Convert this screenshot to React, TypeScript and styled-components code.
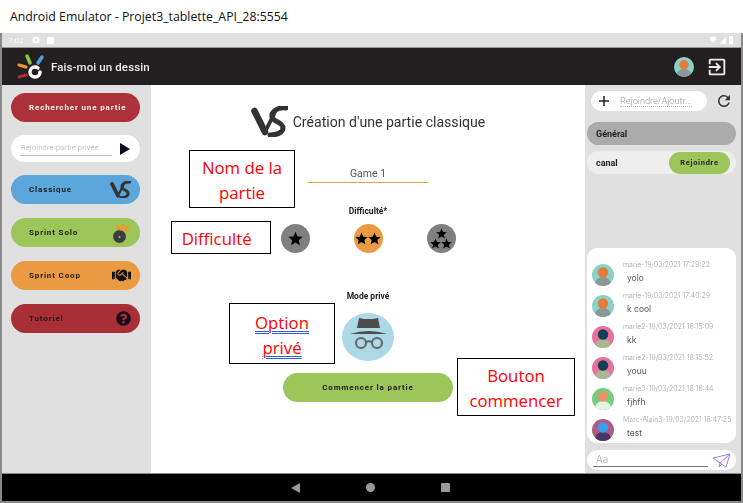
import React from "react";
import styled, { createGlobalStyle } from "styled-components";
import { FaHandshake, FaQuestionCircle } from "react-icons/fa";
import { MdExitToApp, MdRefresh } from "react-icons/md";

const Global = createGlobalStyle`
  html, body { margin: 0; padding: 0; width: 743px; height: 503px; overflow: hidden; background: #fff; }
  * { box-sizing: border-box; }
`;
const Root = styled.div`
  position: relative; width: 743px; height: 503px; overflow: hidden; display: flex; flex-direction: column;
  background: #fff; font-family: Roboto, sans-serif;
`;
const TitleBar = styled.div`
  height: 33px; padding: 0 0 0 10px; display: flex; align-items: center; background: #fff;
  font: 12.3px "Open Sans", sans-serif; color: #111;
`;
const Emulator = styled.div`
  flex: 1; display: flex; flex-direction: column; min-height: 0; filter: blur(0.45px);
  border-left: 2px solid #8a8a8a; border-right: 2px solid #8a8a8a; border-bottom: 2px solid #8a8a8a;
`;
const StatusBar = styled.div`
  height: 15px; background: #dfdfdf; display: flex; align-items: center; gap: 7px; padding: 0 6px;
  color: #fff; font-size: 8px; border-bottom: 1px solid #999;
`;
const StatusTime = styled.span` margin-right: 2px; `;
const StatusRight = styled.div` margin-left: auto; display: flex; gap: 3px; align-items: center; padding-right: 2px; `;
const AppBar = styled.div`
  height: 37px; background: #231f20; display: flex; align-items: center; padding: 0 13px 0 14px; color: #eee;
`;
const AppTitle = styled.div` margin-left: 4px; font-size: 11.5px; font-weight: 500; letter-spacing: .1px; `;
const AppActions = styled.div` margin-left: auto; display: flex; align-items: center; gap: 12px; `;
const Body = styled.div` flex: 1; display: flex; min-height: 0; `;
const Sidebar = styled.aside`
  width: 149px; background: #e0e0e0; padding: 8px 11px 8px 9px; display: flex; flex-direction: column; gap: 14px;
`;
const Pill = styled.div<{ $bg: string; $light?: boolean }>`
  flex: none; height: 29px; border-radius: 15px; background: ${p => p.$bg}; color: ${p => p.$light ? "#f4f4f4" : "#1a1a1a"};
  display: flex; align-items: center; justify-content: space-between; padding: 0 9px 0 18px;
  font-size: 8px; font-weight: 700; letter-spacing: .85px;
`;
const SearchPill = styled(Pill)` margin-bottom: -1px; `;
const PrivateInput = styled.div`
  height: 27px; margin-bottom: -1px; border-radius: 14px; background: #fff; display: flex; align-items: center; justify-content: space-between;
  padding: 0 9px 0 9px; color: #aaa; font-size: 7.5px; font-weight: 300; letter-spacing: .2px;
`;
const PrivateLabel = styled.span`
  display: block; width: 92px; padding: 0 0 3px 0; margin-top: 2px; border-bottom: 1px solid #bdbdbd; white-space: nowrap;
  text-indent: 1px;
`;
const Main = styled.main`
  flex: 1; background: #fff; display: flex; flex-direction: column; align-items: center; padding-top: 21px;
`;
const Heading = styled.div` display: flex; align-items: center; gap: 5px; height: 31px; `;
const HeadingText = styled.h1` margin: 0; font-size: 14.1px; font-weight: 400; color: #333; white-space: nowrap; `;
const NameField = styled.div`
  width: 120px; margin-top: 30px; padding-bottom: 1px; border-bottom: 1.5px solid #ee9c4c; text-align: center;
  font-size: 10.5px; color: #555; line-height: 14px;
`;
const SmallLabel = styled.div` font-size: 8.5px; font-weight: 700; color: #222; line-height: 10px; `;
const DiffLabel = styled(SmallLabel)` margin-top: 23px; `;
const DiffRow = styled.div` margin-top: 8px; width: 175px; display: flex; justify-content: space-between; `;
const DiffButton = styled.div<{ $active?: boolean }>`
  width: 29px; height: 29px; border-radius: 50%; background: ${p => p.$active ? "#ea9a41" : "#808080"};
  display: flex; flex-direction: column; align-items: center; justify-content: center; color: #000;
`;
const StarRow = styled.div` display: flex; justify-content: center; height: 10px; align-items: center; `;
const PrivLabel = styled(SmallLabel)` margin-top: 38px; `;
const PrivateButton = styled.div`
  margin-top: 12px; width: 52px; height: 48px; border-radius: 50%; background: #add8e6; display: flex; align-items: center; justify-content: center;
  padding-bottom: 8px;
`;
const StartButton = styled(Pill)`
  margin-top: 12px; width: 170px; justify-content: center; padding: 0;
`;
const ChatPanel = styled.aside`
  width: 156px; background: #e0e0e0; padding: 6px 5px 3px 2px; display: flex; flex-direction: column;
`;
const ChannelBar = styled.div` display: flex; align-items: center; padding-left: 4px; height: 20px; `;
const ChannelInput = styled.div`
  width: 116px; height: 20px; border-radius: 10px; background: #fff; display: flex; align-items: center; padding-left: 7px; gap: 10px;
  color: #999; font-size: 9.2px; font-weight: 300;
`;
const ChannelText = styled.span` border-bottom: 1px dotted #bbb; line-height: 10px; white-space: nowrap; `;
const Refresh = styled.div` margin-left: 8px; display: flex; color: #333; `;
const ChannelPill = styled.div<{ $bg: string }>`
  height: 23px; border-radius: 12px; background: ${p => p.$bg}; display: flex; align-items: center; justify-content: space-between;
  padding: 0 6px 0 9px; font-size: 9px; font-weight: 700; color: #222;
`;
const GeneralPill = styled(ChannelPill)` margin-top: 11px; `;
const CanalPill = styled(ChannelPill)` margin-top: 6px; `;
const JoinButton = styled.div`
  width: 61px; height: 22px; border-radius: 11px; background: #9dc65a; display: flex; align-items: center; justify-content: center;
  font-size: 7.5px; letter-spacing: .7px; font-weight: 700; color: #222;
`;
const Messages = styled.div`
  margin-top: auto; height: 195px; background: #fff; border-radius: 10px; padding: 16px 0 0 5px; display: flex; flex-direction: column;
`;
const Message = styled.div` flex: none; height: 31px; display: flex; gap: 9px; `;
const MessageBody = styled.div` display: flex; flex-direction: column; gap: 3px; margin-top: -4px; `;
const Meta = styled.div` font: 300 7px Inter, sans-serif; color: #a5a5a5; line-height: 10px; white-space: nowrap; `;
const Text = styled.div` font: 400 8.5px Inter, sans-serif; color: #555; line-height: 11px; padding-left: 4px; `;
const Composer = styled.div`
  margin-top: 7px; height: 20px; border-radius: 10px; background: #fff; display: flex; align-items: center; justify-content: space-between; padding: 0 5px 0 6px;
`;
const ComposerField = styled.div`
  width: 115px; height: 14px; border-bottom: 1px solid #777; color: #aaa; font: 300 10px Inter, sans-serif; line-height: 13px; padding-left: 3px;
`;
const NavBar = styled.div`
  height: 28px; background: #000; border-top: 1px solid #888; display: flex; align-items: center; justify-content: center; gap: 66px; padding-right: 3px;
`;
const Note = styled.div<{ $x: number; $y: number; $w: number; $h: number }>`
  position: absolute; left: ${p => p.$x}px; top: ${p => p.$y}px; width: ${p => p.$w}px; height: ${p => p.$h}px;
  background: #fff; border: 1px solid #000; color: #f00; text-align: center; display: flex; align-items: center; justify-content: center;
  font: 16.8px/25px "Open Sans", sans-serif; padding-top: 2px; white-space: pre;
`;
const Spell = styled.span`
  text-decoration: underline double #2b5fd0; text-decoration-thickness: 1px; text-underline-offset: 2px;
`;

const VS = ({ s = 37, c = "#333" }: { s?: number; c?: string }) => (
  <svg width={s} height={s * 31 / 37} viewBox="0 0 37 31" fill="none" strokeLinecap="round">
    <path d="M3.500 5L14 26" stroke={c} strokeWidth="6.500" />
    <path d="M14 26L24 6" stroke={c} strokeWidth="3.800" />
    <path d="M35 2C26 1 20 6 21 11 22 16 32 16 32 22 32 27 25 29 19 29" stroke={c} strokeWidth="5" />
  </svg>
);
const Logo = () => (
  <svg width="31" height="27" viewBox="0 0 31 27" fill="none" strokeLinecap="round">
    <path d="M11 3l3 7" stroke="#8dc63f" strokeWidth="3.500" />
    <path d="M26 4l-4 6" stroke="#4aa3df" strokeWidth="3.500" />
    <path d="M3 12l7 2" stroke="#ef9a2e" strokeWidth="3" />
    <path d="M3 24l7-2" stroke="#b02a37" strokeWidth="3" />
    <circle cx="19" cy="19" r="5" stroke="#fff" strokeWidth="3.500" strokeDasharray="26 6" />
  </svg>
);
const Avatar = ({ bg, head, body, s = 22 }: { bg: string; head: string; body: string; s?: number }) => (
  <svg width={s} height={s} viewBox="0 0 22 22" style={{ flex: "none" }}>
    <defs><clipPath id={`c${bg.slice(1)}${s}`}><circle cx="11" cy="11" r="11" /></clipPath></defs>
    <g clipPath={`url(#c${bg.slice(1)}${s})`}>
      <rect width="22" height="22" fill={bg} />
      <ellipse cx="11" cy="20" rx="8" ry="7" fill={body} />
      <circle cx="11" cy="8.500" r="5.200" fill={head} />
    </g>
  </svg>
);
const Star = ({ s = 12 }: { s?: number }) => (
  <svg width={s} height={s} viewBox="0 0 24 24" fill="#000"><path d="M12 1l3.200 7.600 8.200.7-6.200 5.400 1.900 8L12 18.400 4.900 22.700l1.900-8L.6 9.300l8.200-.7z" /></svg>
);

const messages = [
  ["marie-19/03/2021 17:29:22", "yolo", "#8ad2c8", "#e37b3a", "#8b9699"],
  ["marie-19/03/2021 17:40:29", "k cool", "#8ad2c8", "#e37b3a", "#8b9699"],
  ["marie2-19/03/2021 18:15:09", "kk", "#e8709a", "#123f57", "#a9b996"],
  ["marie2-19/03/2021 18:15:52", "youu", "#e8709a", "#123f57", "#a9b996"],
  ["marie3-19/03/2021 18:16:44", "fjhfh", "#74cc7c", "#e8946a", "#e4f3e4"],
  ["Marc-Alain3-19/03/2021 18:47:25", "test", "#b05a86", "#3aa0e8", "#4a3566"],
];

export default function App() {
  return (
    <Root>
      <Global />
      <TitleBar>Android Emulator - Projet3_tablette_API_28:5554</TitleBar>
      <Emulator>
        <StatusBar>
          <StatusTime>7:02</StatusTime>
          <svg width="8" height="8" viewBox="0 0 8 8"><circle cx="4" cy="4" r="2.600" fill="none" stroke="#fff" strokeWidth="2" /></svg>
          <svg width="7" height="7" viewBox="0 0 7 7"><rect width="7" height="7" rx="1" fill="#fff" /></svg>
          <StatusRight>
            <svg width="8" height="8" viewBox="0 0 8 8"><path d="M0 2q4-3 8 0L4 7z" fill="#fff" /></svg>
            <svg width="6" height="8" viewBox="0 0 6 8"><path d="M6 0v8H0z" fill="#fff" /></svg>
            <svg width="4" height="8" viewBox="0 0 4 8"><rect width="4" height="8" fill="#fff" /></svg>
          </StatusRight>
        </StatusBar>
        <AppBar>
          <Logo />
          <AppTitle>Fais-moi un dessin</AppTitle>
          <AppActions>
            <Avatar bg="#8ad2c8" head="#e37b3a" body="#8b9699" s={20} />
            <MdExitToApp size={22} color="#eee" />
          </AppActions>
        </AppBar>
        <Body>
          <Sidebar>
            <SearchPill $bg="#ad3138" $light>Rechercher une partie</SearchPill>
            <PrivateInput>
              <PrivateLabel>Rejoindre partie privée</PrivateLabel>
              <svg width="12" height="14" viewBox="0 0 12 14"><path d="M1 1l10 6-10 6z" fill="#12061e" /></svg>
            </PrivateInput>
            <Pill $bg="#5ba6da">Classique<VS s={21} /></Pill>
            <Pill $bg="#9dc65a">Sprint Solo
              <svg width="19" height="22" viewBox="0 0 19 22">
                <circle cx="7.500" cy="14.500" r="6.500" fill="#3d3d3d" />
                <path d="M5 8L4 2l4 3 3-4 2 4 5-2-2 6z" fill="#ee9a2c" />
                <circle cx="7.500" cy="15" r="1" fill="#bbb" />
              </svg>
            </Pill>
            <Pill $bg="#ea9a41">Sprint Coop<FaHandshake size={19} color="#111" /></Pill>
            <Pill $bg="#a92f37">Tutoriel<FaQuestionCircle size={15} color="#170a1e" /></Pill>
          </Sidebar>
          <Main>
            <Heading><VS /><HeadingText>Création d'une partie classique</HeadingText></Heading>
            <NameField>Game 1</NameField>
            <DiffLabel>Difficulté*</DiffLabel>
            <DiffRow>
              <DiffButton><StarRow><Star s={15} /></StarRow></DiffButton>
              <DiffButton $active><StarRow><Star s={13} /><Star s={13} /></StarRow></DiffButton>
              <DiffButton><StarRow><Star s={11} /></StarRow><StarRow><Star s={11} /><Star s={11} /></StarRow></DiffButton>
            </DiffRow>
            <PrivLabel>Mode privé</PrivLabel>
            <PrivateButton>
              <svg width="37" height="33" viewBox="0 0 37 33" fill="none">
                <path d="M7 11L9 1c3 1 6 1 9.500 1 3 0 6 0 9.500-1l2 10z" fill="#4c4c4c" />
                <path d="M0 17q18.500-6 37 0z" fill="#4c4c4c" />
                <circle cx="11" cy="26" r="5" stroke="#5b6468" strokeWidth="2" />
                <circle cx="27" cy="26" r="5" stroke="#5b6468" strokeWidth="2" />
                <path d="M16 25q2.500-1.500 6 0" stroke="#5b6468" strokeWidth="2" />
              </svg>
            </PrivateButton>
            <StartButton $bg="#9dc65a">Commencer la partie</StartButton>
          </Main>
          <ChatPanel>
            <ChannelBar>
              <ChannelInput>
                <svg width="12" height="12" viewBox="0 0 12 12"><path d="M6 1v10M1 6h10" stroke="#222" strokeWidth="1.500" /></svg>
                <ChannelText>Rejoindre/Ajoutr...</ChannelText>
              </ChannelInput>
              <Refresh><MdRefresh size={18} /></Refresh>
            </ChannelBar>
            <GeneralPill $bg="#ababab">Général</GeneralPill>
            <CanalPill $bg="#eeeeee">canal<JoinButton>Rejoindre</JoinButton></CanalPill>
            <Messages>
              {messages.map(m => (
                <Message key={m[0]}>
                  <Avatar bg={m[2]} head={m[3]} body={m[4]} />
                  <MessageBody><Meta>{m[0]}</Meta><Text>{m[1]}</Text></MessageBody>
                </Message>
              ))}
            </Messages>
            <Composer>
              <ComposerField>Aa</ComposerField>
              <svg width="19" height="15" viewBox="0 0 19 15" fill="none" stroke="#a87be0" strokeWidth="1">
                <path d="M1 5L18 1 14 14 8 10zM18 1L8 10l-1 4 3-3" />
              </svg>
            </Composer>
          </ChatPanel>
        </Body>
        <NavBar>
          <svg width="9" height="10" viewBox="0 0 9 10"><path d="M9 0v10L0 5z" fill="#999" /></svg>
          <svg width="9" height="9" viewBox="0 0 9 9"><circle cx="4.500" cy="4.500" r="4.500" fill="#999" /></svg>
          <svg width="9" height="9" viewBox="0 0 9 9"><rect width="9" height="9" rx="1" fill="#999" /></svg>
        </NavBar>
      </Emulator>
      <Note $x={189} $y={150} $w={106} $h={58}><div>Nom de la{"\n"}partie</div></Note>
      <Note $x={171} $y={221} $w={100} $h={33}>Difficulté{"  "}</Note>
      <Note $x={229} $y={303} $w={106} $h={61}><div><Spell>Option</Spell>{"\n"}<Spell>privé</Spell></div></Note>
      <Note $x={457} $y={358} $w={118} $h={58}><div>Bouton{"\n"}commencer</div></Note>
    </Root>
  );
}
